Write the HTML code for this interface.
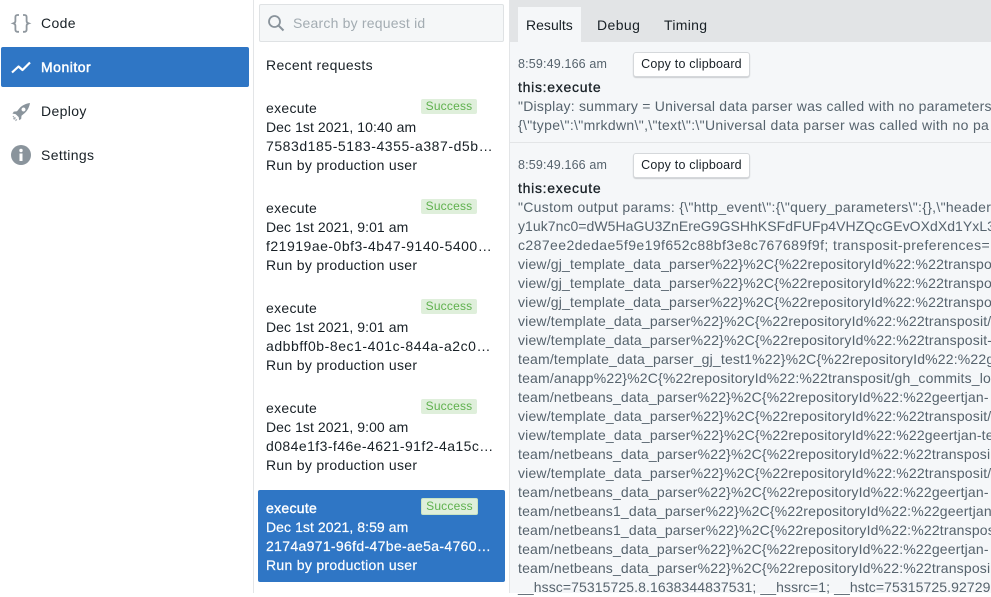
<!DOCTYPE html>
<html><head><meta charset="utf-8">
<style>
html,body{margin:0;padding:0;width:991px;height:593px;overflow:hidden;background:#fff;font-family:"Liberation Sans",sans-serif;font-size:14px;color:#182026}
.a{position:absolute;white-space:nowrap;line-height:19px}
.t{left:266px;letter-spacing:.3px}
.d{letter-spacing:.07px}
.badge{position:absolute;left:421px;width:56px;height:15px;border-radius:2px;background:#dfefdb;color:#5fb14e;font-size:12px;line-height:15px;text-align:center;letter-spacing:.2px}
.w{color:#fff;-webkit-text-stroke:.2px #fff}
.l{left:518px;color:#56636d;letter-spacing:.18px}
.btn{position:absolute;left:633px;width:115px;height:23px;border:1px solid #d5d8db;border-radius:3px;background:#fff;box-shadow:0 1px 1px rgba(16,22,26,.18);font-size:12.5px;line-height:23px;text-align:center;letter-spacing:.2px}
.ts{left:518px;color:#56636d;font-size:12.5px;letter-spacing:.16px}
.b{left:518px;letter-spacing:.72px;-webkit-text-stroke:.3px #182026}
.nav{left:41px;letter-spacing:.35px}
</style></head><body>
<div style="position:absolute;left:253px;top:0;width:1px;height:593px;background:#e3e5e7"></div>
<div style="position:absolute;left:1px;top:47px;width:248px;height:40px;background:#2f76c5;border-radius:2px"></div>

<svg style="position:absolute;left:0;top:0" width="40" height="170" viewBox="0 0 40 170">
<path d="M19 15h-1.600c-1.200 0-2 .8-2 2v4c0 1.200-.8 2-2 2.400 1.200.4 2 1.200 2 2.400v4c0 1.200.8 2 2 2H19" fill="none" stroke="#8f979e" stroke-width="1.800"/>
<path d="M23 15h1.600c1.200 0 2 .8 2 2v4c0 1.200-.0 2 0 0 0 0 0 0 0" fill="none" stroke="none"/>
<path d="M23 15h1.600c1.200 0 2 .8 2 2v4c0 1.200.8 2 2 2.400-1.200.4-2 1.200-2 2.400v4c0 1.200-.8 2-2 2H23" fill="none" stroke="#8f979e" stroke-width="1.800"/>
<path d="M12 72.500l6.500-6 4 3.500 7.500-7.500" fill="none" stroke="#fff" stroke-width="2.200" stroke-linejoin="round"/>
<path fill-rule="evenodd" d="M30 103c-4.200.6-7.800 2.300-10.300 5l-2.700 3.300-3.200.3-1.300 2 3.100.5 3.100 3 .5 3.100 2-1.300.3-3.200 3.300-2.700c2.800-2.500 4.500-6 5.200-10zM23.500 107.500a2 2 0 1 0 .01 0z" fill="#8a949c"/>
<path d="M13 118l2-1 1 1-2 2zM15 120l1.500-1 .8.8-1.500 1.500zM12.500 116.500l1-.8.8.8-1 1z" fill="#a5acb2"/>
<circle cx="21" cy="155" r="10" fill="#8a949c"/>
<rect x="19.500" y="153.500" width="3" height="7.500" fill="#fff"/>
<circle cx="21" cy="150.500" r="1.700" fill="#fff"/>
</svg>
<div class="a nav" style="top:14px">Code</div>
<div class="a nav w" style="top:58px;letter-spacing:.5px;-webkit-text-stroke:.45px #fff">Monitor</div>
<div class="a nav" style="top:102px">Deploy</div>
<div class="a nav" style="top:146px">Settings</div>

<div style="position:absolute;left:259px;top:4px;width:243px;height:36px;border:1px solid #dfe2e4;border-radius:2px;background:#f5f7f8"></div>
<svg style="position:absolute;left:267px;top:14px" width="18" height="18" viewBox="0 0 18 18"><circle cx="7.500" cy="7.500" r="5.500" fill="none" stroke="#8a949c" stroke-width="1.800"/><path d="M11.500 11.500l5 5" stroke="#8a949c" stroke-width="2"/></svg>
<div class="a" style="left:293px;top:14px;color:#a3acb2;letter-spacing:.2px">Search by request id</div>
<div class="a" style="left:266px;top:56px;letter-spacing:.33px">Recent requests</div>

<div class="badge" style="top:99px">Success</div>
<div class="a t" style="top:99px">execute</div>
<div class="a t d" style="top:118px">Dec 1st 2021, 10:40 am</div>
<div class="a t" style="top:137px;letter-spacing:.55px">7583d185-5183-4355-a387-d5b…</div>
<div class="a t" style="top:156px">Run by production user</div>

<div class="badge" style="top:199px">Success</div>
<div class="a t" style="top:199px">execute</div>
<div class="a t d" style="top:218px">Dec 1st 2021, 9:01 am</div>
<div class="a t" style="top:237px;letter-spacing:.5px">f21919ae-0bf3-4b47-9140-5400…</div>
<div class="a t" style="top:256px">Run by production user</div>

<div class="badge" style="top:299px">Success</div>
<div class="a t" style="top:299px">execute</div>
<div class="a t d" style="top:318px">Dec 1st 2021, 9:01 am</div>
<div class="a t" style="top:337px;letter-spacing:.55px">adbbff0b-8ec1-401c-844a-a2c0…</div>
<div class="a t" style="top:356px">Run by production user</div>

<div class="badge" style="top:399px">Success</div>
<div class="a t" style="top:399px">execute</div>
<div class="a t d" style="top:418px">Dec 1st 2021, 9:00 am</div>
<div class="a t" style="top:437px;letter-spacing:.43px">d084e1f3-f46e-4621-91f2-4a15c…</div>
<div class="a t" style="top:456px">Run by production user</div>

<div style="position:absolute;left:258px;top:490px;width:247px;height:92px;background:#2f76c5;border-radius:2px"></div>
<div class="badge" style="top:498px;border:1px solid #c9e4c3;height:15px;width:55px">Success</div>
<div class="a t w" style="top:499px;letter-spacing:.3px;-webkit-text-stroke:.4px #fff">execute</div>
<div class="a t w d" style="top:518px">Dec 1st 2021, 8:59 am</div>
<div class="a t w" style="top:537px;letter-spacing:.33px">2174a971-96fd-47be-ae5a-4760…</div>
<div class="a t w" style="top:556px">Run by production user</div>

<div style="position:absolute;left:509px;top:0;width:482px;height:593px;background:#f5f7f9;border-left:1px solid #e3e5e7"></div>
<div style="position:absolute;left:510px;top:0;width:481px;height:42px;background:#e2e4e6"></div>
<div style="position:absolute;left:518px;top:7px;width:63px;height:35px;background:#f5f7f9"></div>
<div class="a" style="left:526px;top:16px;letter-spacing:.02px">Results</div>
<div class="a" style="left:597px;top:16px;letter-spacing:.4px">Debug</div>
<div class="a" style="left:664px;top:16px;letter-spacing:.3px">Timing</div>

<div class="a ts" style="top:55px">8:59:49.166 am</div>
<div class="btn" style="top:52px">Copy to clipboard</div>
<div class="a b" style="top:78px">this:execute</div>
<div class="a l" style="top:97px;letter-spacing:.23px">"Display: summary = Universal data parser was called with no parameters</div>
<div class="a l" style="top:116px;letter-spacing:.33px">{\"type\":\"mrkdwn\",\"text\":\"Universal data parser was called with no pa</div>
<div style="position:absolute;left:510px;top:142px;width:481px;height:1px;background:#e3e5e7"></div>

<div class="a ts" style="top:156px">8:59:49.166 am</div>
<div class="btn" style="top:153px">Copy to clipboard</div>
<div class="a b" style="top:179px">this:execute</div>
<div class="a l" style="top:198px;letter-spacing:.3px">"Custom output params: {\"http_event\":{\"query_parameters\":{},\"header</div>
<div class="a l" style="top:217px;letter-spacing:.05px">y1uk7nc0=dW5HaGU3ZnEreG9GSHhKSFdFUFp4VHZQcGEvOXdXd1YxL3</div>
<div class="a l" style="top:236px;letter-spacing:.42px">c287ee2dedae5f9e19f652c88bf3e8c767689f9f; transposit-preferences=</div>
<div class="a l" style="top:255px">view/gj_template_data_parser%22}%2C{%22repositoryId%22:%22transpo</div>
<div class="a l" style="top:274px">view/gj_template_data_parser%22}%2C{%22repositoryId%22:%22transpo</div>
<div class="a l" style="top:293px">view/gj_template_data_parser%22}%2C{%22repositoryId%22:%22transpo</div>
<div class="a l" style="top:312px">view/template_data_parser%22}%2C{%22repositoryId%22:%22transposit/</div>
<div class="a l" style="top:331px">view/template_data_parser%22}%2C{%22repositoryId%22:%22transposit-</div>
<div class="a l" style="top:350px">team/template_data_parser_gj_test1%22}%2C{%22repositoryId%22:%22g</div>
<div class="a l" style="top:369px">team/anapp%22}%2C{%22repositoryId%22:%22transposit/gh_commits_lo</div>
<div class="a l" style="top:388px">team/netbeans_data_parser%22}%2C{%22repositoryId%22:%22geertjan-</div>
<div class="a l" style="top:407px">view/template_data_parser%22}%2C{%22repositoryId%22:%22transposit/</div>
<div class="a l" style="top:426px">view/template_data_parser%22}%2C{%22repositoryId%22:%22geertjan-te</div>
<div class="a l" style="top:445px">team/netbeans_data_parser%22}%2C{%22repositoryId%22:%22transposi</div>
<div class="a l" style="top:464px">view/template_data_parser%22}%2C{%22repositoryId%22:%22transposit/</div>
<div class="a l" style="top:483px">team/netbeans_data_parser%22}%2C{%22repositoryId%22:%22geertjan-</div>
<div class="a l" style="top:502px">team/netbeans1_data_parser%22}%2C{%22repositoryId%22:%22geertjan</div>
<div class="a l" style="top:521px">team/netbeans1_data_parser%22}%2C{%22repositoryId%22:%22transpos</div>
<div class="a l" style="top:540px">team/netbeans_data_parser%22}%2C{%22repositoryId%22:%22geertjan-</div>
<div class="a l" style="top:559px">team/netbeans_data_parser%22}%2C{%22repositoryId%22:%22transposi</div>
<div class="a l" style="top:578px;letter-spacing:.09px">__hssc=75315725.8.1638344837531; __hssrc=1; __hstc=75315725.92729</div>
</body></html>
